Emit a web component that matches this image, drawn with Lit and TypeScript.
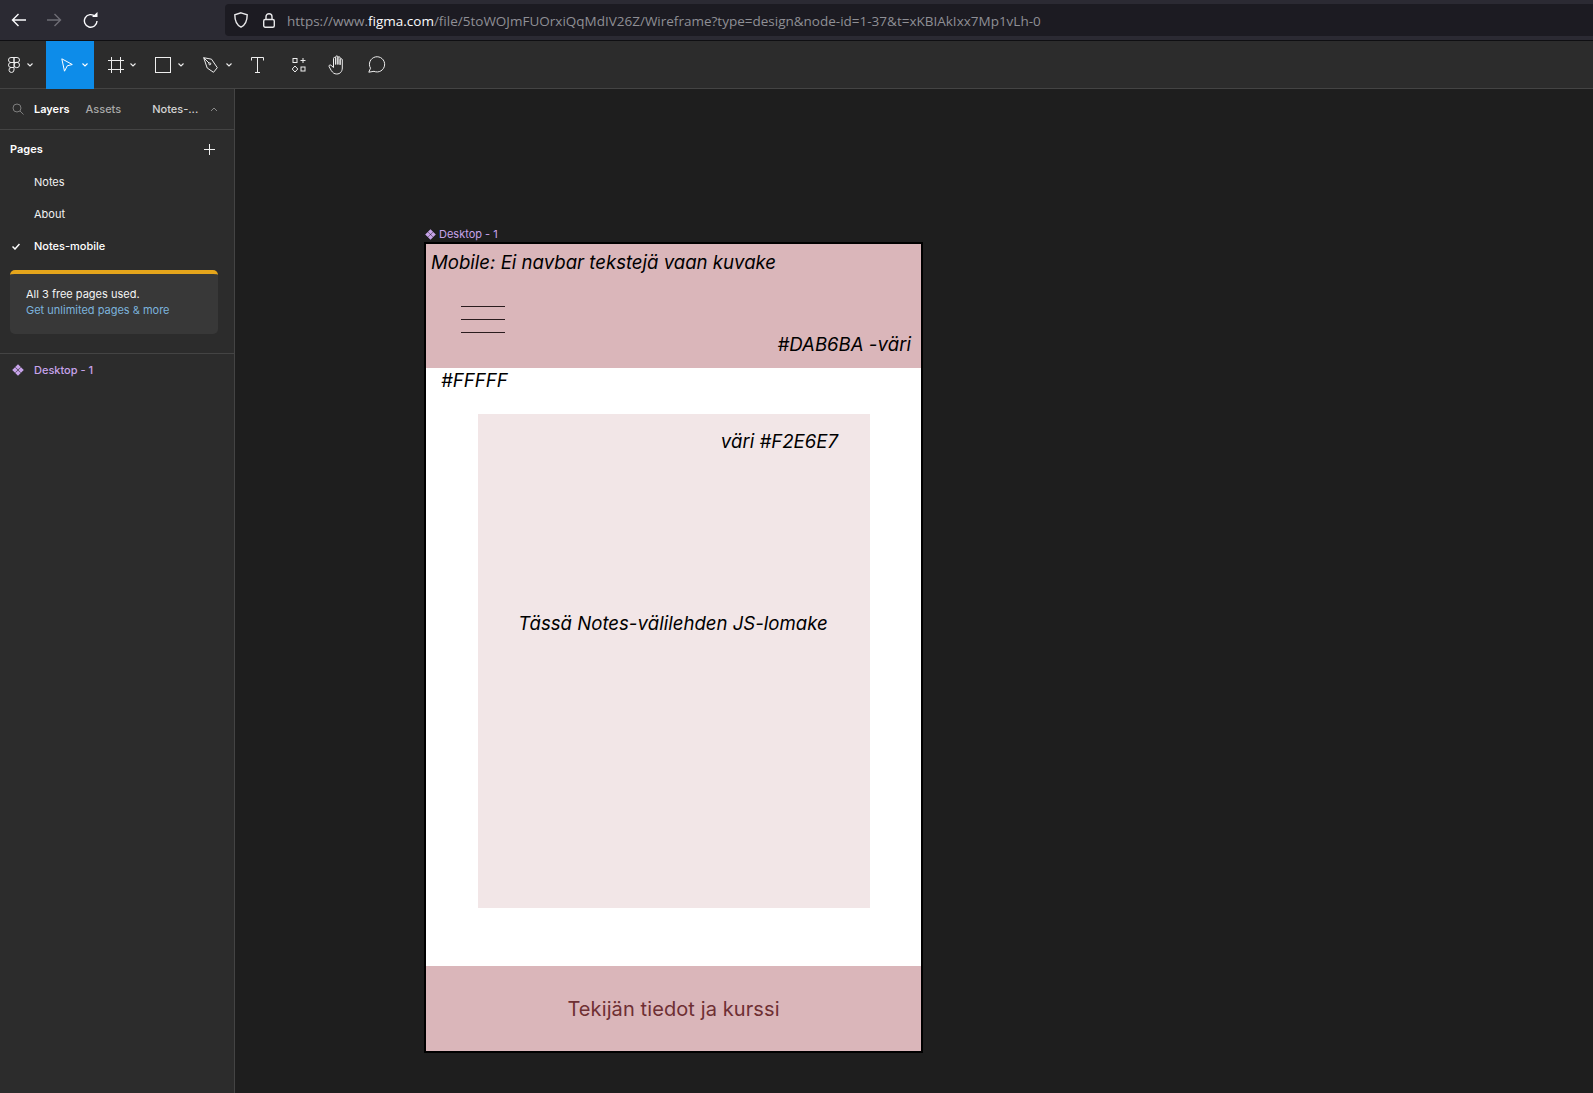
import { LitElement, html, css, svg } from 'lit';
import { customElement } from 'lit/decorators.js';

const chevron = svg`<path d="M0.500 0.500l2.500 2.500 2.500-2.500" fill="none" stroke="currentColor" stroke-width="1.100"/>`;
const instance = svg`<path d="M6 0.200L8.800 3 6 5.600 3.200 3zM3 3.200L5.700 6 3 8.800 0.200 6zM9 3.200L11.800 6 9 8.800 6.300 6zM6 6.400L8.800 9 6 11.800 3.200 9z"/>`;

@customElement('app-root')
export class AppRoot extends LitElement {
  static override styles = css`
    :host {
      display: flex;
      flex-direction: column;
      width: 1593px;
      height: 1093px;
      overflow: hidden;
      background: #1e1e1e;
      font-family: Inter, 'Liberation Sans', sans-serif;
      color: #fff;
    }
    svg { display: block; flex: none; }

    /* browser chrome */
    .browser {
      height: 40px;
      flex: none;
      display: flex;
      align-items: center;
      background: #2b2a33;
      border-bottom: 1px solid #0f0f12;
    }
    .nav { display: flex; align-items: center; width: 225px; padding-left: 11px; gap: 21px; box-sizing: border-box; }
    .urlbar {
      flex: 1;
      height: 32px;
      display: flex;
      align-items: center;
      background: #1c1b22;
      border-radius: 4px 0 0 4px;
      padding-left: 9px;
    }
    .lock { margin: 0 12px 0 15px; }
    .url {
      font-family: 'Open Sans', 'Liberation Sans', sans-serif;
      font-size: 13.5px;
      color: #8f8f95;
      padding-top: 1px;
    }
    .url b { font-weight: 400; color: #fbfbfe; }

    /* figma toolbar */
    .toolbar {
      height: 47px;
      flex: none;
      display: flex;
      align-items: center;
      background: #2c2c2c;
      border-bottom: 1px solid #444;
      color: #eee;
    }
    .tool { height: 48px; display: flex; align-items: center; box-sizing: border-box; flex: none; }
    .tool.logo { width: 46px; padding-left: 8px; gap: 7px; }
    .tool.move { width: 48px; padding-left: 15px; gap: 9px; background: #0d8ce9; color: #fff; }
    .tool.frame { width: 50px; padding-left: 14px; gap: 6px; }
    .tool.rect { width: 46px; padding-left: 11px; gap: 7px; }
    .tool.pen { width: 46px; padding-left: 13px; gap: 8px; }
    .tool.text { width: 40px; padding-left: 15px; }
    .tool.comp { width: 40px; padding-left: 16px; }
    .tool.hand { width: 40px; padding-left: 12px; }
    .tool.comment { width: 40px; padding-left: 12px; }

    .main { flex: 1; display: flex; min-height: 0; }

    /* left panel */
    .side {
      width: 235px;
      flex: none;
      box-sizing: border-box;
      background: #2c2c2c;
      border-right: 1px solid #444;
      font-size: 11px;
      font-weight: 400;
    }
    .tabs {
      height: 40px;
      display: flex;
      align-items: center;
      border-bottom: 1px solid #444;
      padding-left: 12px;
      color: #a8a8a8;
      font-weight: 500;
    }
    .tabs .layers { color: #fff; font-weight: 600; margin-left: 10px; }
    .tabs .assets { margin-left: 16px; }
    .tabs .page { color: #d4d4d4; margin-left: 31px; }
    .tabs .up { margin-left: 12px; color: #888; }
    .pages-head {
      height: 36px;
      box-sizing: border-box;
      padding: 2px 19px 0 10px;
      display: flex;
      align-items: center;
      justify-content: space-between;
      font-weight: 600;
    }
    .page-row { height: 32px; display: flex; align-items: center; color: #f2f2f2; }
    .page-row .check { width: 34px; display: flex; justify-content: center; padding-right: 2px; box-sizing: border-box; }
    .page-row.on { font-weight: 500; color: #fff; }
    .notice {
      margin: 8px 16px 0 10px;
      height: 64px;
      box-sizing: border-box;
      border-top: 4px solid #e5a51b;
      border-radius: 5px;
      background: #383838;
      padding: 12px 16px 0;
      line-height: 16px;
      color: #f4f4f4;
    }
    .notice a { display: block; color: #7cb3dc; }
    .layer {
      margin-top: 19px;
      border-top: 1px solid #444;
      height: 32px;
      display: flex;
      align-items: center;
      color: #c7a3ea;
      font-weight: 500;
    }
    .layer .ic { width: 34px; display: flex; justify-content: center; padding-left: 2px; box-sizing: border-box; }

    /* canvas */
    .canvas { flex: 1; position: relative; background: #1e1e1e; }
    .frame-label {
      position: absolute;
      left: 190px;
      top: 138px;
      display: flex;
      align-items: center;
      gap: 3px;
      font-size: 11px;
      color: #c7a3ea;
    }
    .wire {
      position: absolute;
      left: 191px;
      top: 155px;
      width: 495px;
      height: 807px;
      display: flex;
      flex-direction: column;
      background: #fff;
      outline: 2px solid #000;
      color: #000;
      font-size: 18.6px;
      font-style: italic;
    }
    .wire-head {
      height: 124px;
      flex: none;
      background: #dab6ba;
      position: relative;
      padding: 6px 0 0 5px;
      box-sizing: border-box;
      line-height: 24px;
    }
    .burger {
      margin: 32px 0 0 30px;
      width: 44px;
      display: flex;
      flex-direction: column;
      gap: 12px;
    }
    .burger i { display: block; height: 1px; background: #2a1c1e; }
    .swatch-head { position: absolute; right: 10px; bottom: 12px; }
    .wire-body { flex: 1; display: flex; flex-direction: column; align-items: center; }
    .white-note { align-self: flex-start; margin: 0 0 0 15px; height: 46px; line-height: 24px; }
    .form {
      width: 392px;
      height: 494px;
      margin-left: 1px;
      background: #f2e6e7;
      display: flex;
      flex-direction: column;
      align-items: center;
    }
    .form .tint { align-self: flex-end; margin: 15px 32px 0 0; line-height: 24px; }
    .form .mid { margin: 158px 2px 0 0; line-height: 24px; }
    .wire-foot {
      height: 85px;
      flex: none;
      background: #dab6ba;
      display: flex;
      align-items: center;
      justify-content: center;
      color: #6e2f33;
      font-size: 20px;
      letter-spacing: 0.1px;
      font-style: normal;
    }
  `;

  override render() {
    return html`
      <div class="browser">
        <div class="nav">
          <svg width="15" height="14" viewBox="0 0 15 14" fill="none" stroke="#fbfbfe" stroke-width="1.4"><path d="M15 7H1.500M7.500 1L1.500 7l6 6"/></svg>
          <svg width="15" height="14" viewBox="0 0 15 14" fill="none" stroke="#6e6d75" stroke-width="1.4"><path d="M0 7h13.500M7.500 1l6 6-6 6"/></svg>
          <svg width="15" height="16" viewBox="0 0 15 16" fill="none" stroke="#fbfbfe" stroke-width="1.4"><path d="M12.200 4.500A6.300 6.300 0 1 0 14 9"/><path d="M9 5h5.500V0z" fill="#fbfbfe" stroke="none"/></svg>
        </div>
        <div class="urlbar">
          <svg width="14" height="16" viewBox="0 0 14 16" fill="none" stroke="#e8e8ea" stroke-width="1.4"><path d="M7 0.800l6.200 2c0 6-1.200 10-6.200 12.400C2 12.800 0.800 8.800 0.800 2.800z"/></svg>
          <svg class="lock" width="12" height="15" viewBox="0 0 12 15" fill="none" stroke="#e8e8ea" stroke-width="1.4"><rect x="0.700" y="6.500" width="10.600" height="7.800" rx="1.500"/><path d="M3 6.500V3.700a3 3 0 0 1 6 0v2.800"/></svg>
          <span class="url">https://www.<b>figma.com</b>/file/5toWOJmFUOrxiQqMdIV26Z/Wireframe?type=design&amp;node-id=1-37&amp;t=xKBIAkIxx7Mp1vLh-0</span>
        </div>
      </div>

      <div class="toolbar">
        <div class="tool logo">
          <svg width="12" height="16" viewBox="0 0 12 16" fill="none" stroke="currentColor"><path d="M6 0.500H3a2.500 2.500 0 0 0 0 5H6zM6 0.500h3a2.500 2.500 0 0 1 0 5H6zM6 5.500H3a2.500 2.500 0 0 0 0 5H6zM6 10.500H3A2.500 2.500 0 1 0 6 13zM11.500 8a2.700 2.700 0 1 1-5.400 0 2.700 2.700 0 0 1 5.400 0z"/></svg>
          <svg width="6" height="4" viewBox="0 0 6 4">${chevron}</svg>
        </div>
        <div class="tool move">
          <svg width="12" height="14" viewBox="0 0 12 14" fill="none" stroke="currentColor"><path d="M0.800 0.800l10.500 5.700-5 1.300-2.800 5.400z"/></svg>
          <svg width="6" height="4" viewBox="0 0 6 4">${chevron}</svg>
        </div>
        <div class="tool frame">
          <svg width="16" height="16" viewBox="0 0 16 16" fill="none" stroke="currentColor"><path d="M0 3.500h16M0 12.500h16M3.500 0v16M12.500 0v16"/></svg>
          <svg width="6" height="4" viewBox="0 0 6 4">${chevron}</svg>
        </div>
        <div class="tool rect">
          <svg width="16" height="16" viewBox="0 0 16 16" fill="none" stroke="currentColor"><rect x="0.500" y="0.500" width="15" height="15"/></svg>
          <svg width="6" height="4" viewBox="0 0 6 4">${chevron}</svg>
        </div>
        <div class="tool pen">
          <svg width="15" height="16" viewBox="0 0 15 16" fill="none" stroke="currentColor"><path d="M0.700 0.700l7.800 1.500 5.800 8.500-3.800 4.600-6.300-4.300z"/><path d="M0.700 0.700l5.300 5.300"/><circle cx="6.800" cy="6.800" r="1"/></svg>
          <svg width="6" height="4" viewBox="0 0 6 4">${chevron}</svg>
        </div>
        <div class="tool text">
          <svg width="13" height="16" viewBox="0 0 13 16" fill="none" stroke="currentColor"><path d="M0.500 3.500v-3h12v3M6.500 0.500v15M4 15.500h5"/></svg>
        </div>
        <div class="tool comp">
          <svg width="14" height="14" viewBox="0 0 14 14" fill="none" stroke="currentColor"><rect x="1" y="0.500" width="4" height="4"/><path d="M11 0v5M8.500 2.500h5"/><path d="M3 8l2.800 3-2.800 3-2.800-3z"/><rect x="9" y="9" width="4" height="4"/></svg>
        </div>
        <div class="tool hand">
          <svg width="19" height="20" viewBox="0 0 19 20" fill="none" stroke="currentColor"><path d="M5.500 11V3.500a1.100 1.100 0 0 1 2.200 0V9.500V2a1.100 1.100 0 0 1 2.200 0v7.500V2.800a1.100 1.100 0 0 1 2.200 0v7V4.800a1.100 1.100 0 0 1 2.200 0V13c0 3.500-2.200 6-5.500 6-2.700 0-3.900-1.200-5.500-3.400L1.200 11.800c-.9-1.100.6-2.400 1.700-1.600L5.500 12.500z"/></svg>
        </div>
        <div class="tool comment">
          <svg width="19" height="17" viewBox="0 0 19 17" fill="none" stroke="currentColor"><path d="M0.800 16.200l1.700-4A7.600 7.600 0 1 1 6 15.300z"/></svg>
        </div>
      </div>

      <div class="main">
        <aside class="side">
          <div class="tabs">
            <svg width="12" height="12" viewBox="0 0 12 12" fill="none" stroke="#7d7d7d"><circle cx="5" cy="5" r="4"/><path d="M8 8l3.500 3.500"/></svg>
            <span class="layers">Layers</span>
            <span class="assets">Assets</span>
            <span class="page">Notes-...</span>
            <svg class="up" width="8" height="5" viewBox="0 0 8 5"><path d="M1 4l3-3 3 3" fill="none" stroke="currentColor"/></svg>
          </div>
          <div class="pages-head">
            <span>Pages</span>
            <svg width="11" height="11" viewBox="0 0 11 11" stroke="#f0f0f0"><path d="M5.500 0v11M0 5.500h11"/></svg>
          </div>
          <div class="page-row"><span class="check"></span>Notes</div>
          <div class="page-row"><span class="check"></span>About</div>
          <div class="page-row on">
            <span class="check"><svg width="8" height="7" viewBox="0 0 8 7" fill="none" stroke="#fff" stroke-width="1.500"><path d="M0.500 3.500l2.500 2.500 4.500-5"/></svg></span>
            Notes-mobile
          </div>
          <div class="notice">
            All 3 free pages used.
            <a>Get unlimited pages &amp; more</a>
          </div>
          <div class="layer">
            <span class="ic"><svg width="12" height="12" viewBox="0 0 12 12" fill="#c7a3ea">${instance}</svg></span>
            Desktop - 1
          </div>
        </aside>

        <div class="canvas">
          <div class="frame-label">
            <svg width="11" height="11" viewBox="0 0 12 12" fill="#c7a3ea">${instance}</svg>
            Desktop - 1
          </div>
          <div class="wire">
            <div class="wire-head">
              Mobile: Ei navbar tekstejä vaan kuvake
              <div class="burger"><i></i><i></i><i></i></div>
              <span class="swatch-head">#DAB6BA -väri</span>
            </div>
            <div class="wire-body">
              <div class="white-note">#FFFFF</div>
              <div class="form">
                <span class="tint">väri #F2E6E7</span>
                <span class="mid">Tässä Notes-välilehden JS-lomake</span>
              </div>
            </div>
            <div class="wire-foot">Tekijän tiedot ja kurssi</div>
          </div>
        </div>
      </div>
    `;
  }
}
